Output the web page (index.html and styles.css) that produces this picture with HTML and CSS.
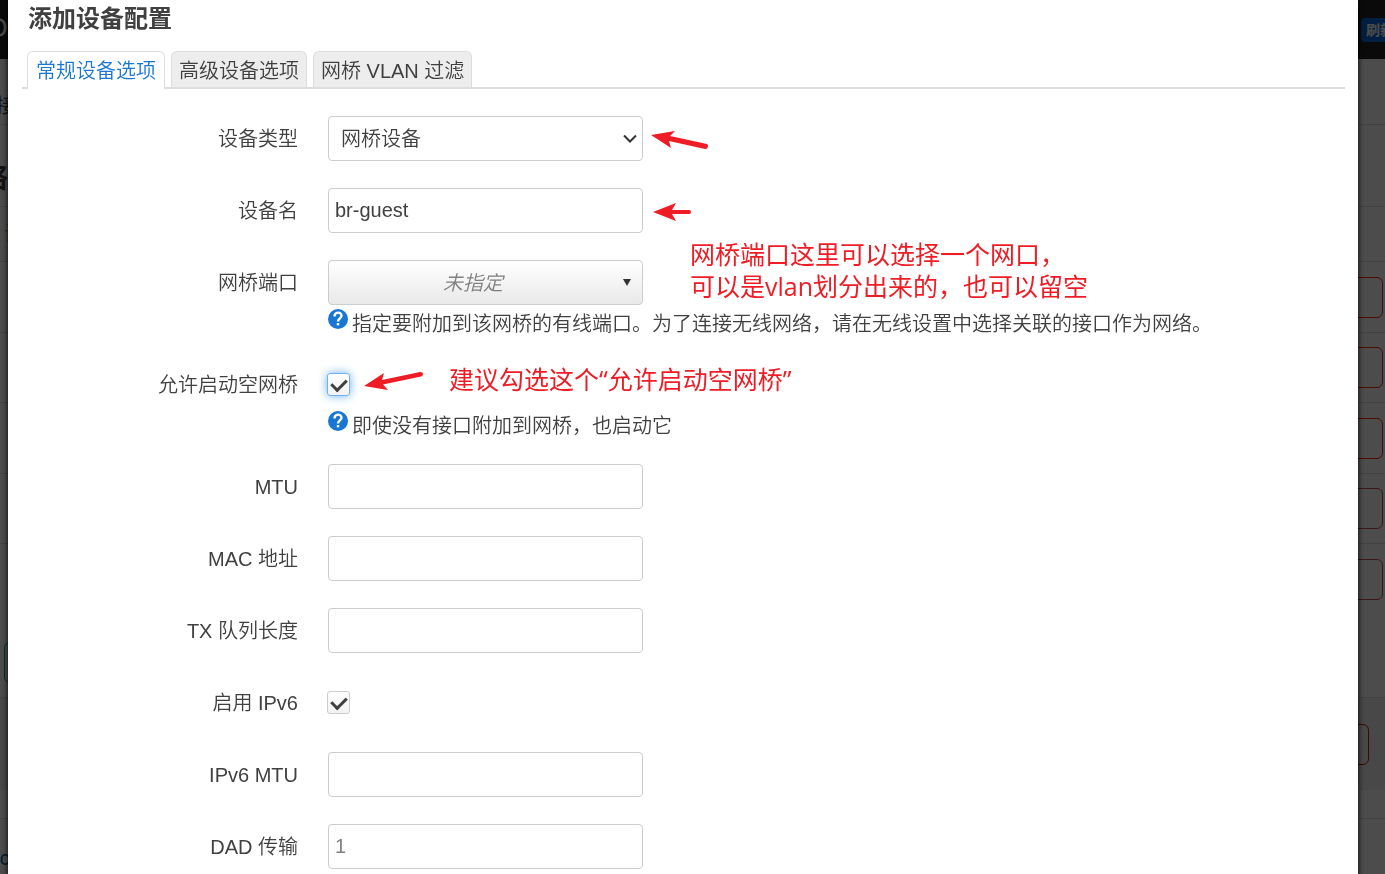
FILE: index.html
```html
<!DOCTYPE html>
<html lang="zh-CN">
<head>
    <meta charset="UTF-8">
    <meta name="viewport" content="width=device-width, initial-scale=1.0">
    <title>添加设备配置</title>
    <link rel="stylesheet" href="styles.css">
</head>
<body>

    <!-- 背景页面 -->
    <div id="page">
        <header class="navbar">
            <span class="brand">O</span>
            <button class="refresh">刷新</button>
        </header>
        <div class="page-tabs"><span>接</span></div>
        <h2 class="page-title">络</h2>
        <div class="table-head"><span>设</span></div>
        <div class="iface"><button class="remove">除</button></div>
        <div class="iface"><button class="remove">除</button></div>
        <div class="iface"><button class="remove">除</button></div>
        <div class="iface disabled"><button class="remove">除</button></div>
        <div class="iface disabled"><button class="remove">除</button></div>
        <div class="add-row"><button class="add">添加</button></div>
        <div class="page-actions"><button class="remove">复位</button></div>
        <footer><a href="#">rc</a></footer>
    </div>

    <!-- 对话框 -->
    <div id="overlay">
        <main class="modal" role="dialog" aria-labelledby="title">
            <h4 id="title">添加设备配置</h4>

            <ul class="tabs">
                <li class="active"><a href="#">常规设备选项</a></li>
                <li><a href="#">高级设备选项</a></li>
                <li><a href="#">网桥 VLAN 过滤</a></li>
            </ul>

            <form>
                <div class="row">
                    <label for="type">设备类型</label>
                    <div class="field">
                        <div class="control">
                            <select id="type">
                                <option>网桥设备</option>
                            </select>
                            <svg class="chevron" width="14" height="10" viewBox="0 0 14 10">
                                <path d="M1 1.500 L7 7.500 L13 1.500"/>
                            </svg>
                            <svg class="arrow arrow-type" width="58" height="22" viewBox="0 0 58 22">
                                <path d="M0 5 L24 1 L19 6 L56 14 Q58 16 56 18.500 L54 19 L18 11 L20 18 Z"/>
                            </svg>
                        </div>
                    </div>
                </div>

                <div class="row">
                    <label for="name">设备名</label>
                    <div class="field">
                        <div class="control">
                            <input type="text" id="name" value="br-guest">
                            <svg class="arrow arrow-name" width="40" height="20" viewBox="0 0 40 20">
                                <path d="M0 10 L23 1 L19 8 L36 8 Q38 8 38 10 Q38 12 36 12 L19 12 L23 19 Z"/>
                            </svg>
                        </div>
                    </div>
                </div>

                <div class="row">
                    <label for="ports">网桥端口</label>
                    <div class="field">
                        <div class="control">
                            <button type="button" class="dropdown" id="ports">
                                <em>未指定</em>
                                <span class="caret"></span>
                            </button>
                            <p class="note note-ports">网桥端口这里可以选择一个网口，<br>可以是vlan划分出来的，也可以留空</p>
                        </div>
                        <div class="help">
                            <svg width="20" height="20" viewBox="0 0 20 20">
                                <circle cx="10" cy="10" r="10"/>
                                <path d="M6.500 7.500 C6.500 2.500 13.500 2.500 13.500 6.800 C13.500 9.300 10 9.500 10 12.500"/>
                                <rect x="8.800" y="14" width="2.400" height="2.400"/>
                            </svg>
                            <span>指定要附加到该网桥的有线端口。为了连接无线网络，请在无线设置中选择关联的接口作为网络。</span>
                        </div>
                    </div>
                </div>

                <div class="row">
                    <label for="empty">允许启动空网桥</label>
                    <div class="field">
                        <div class="control">
                            <input type="checkbox" id="empty" class="focused" checked>
                            <svg class="arrow arrow-empty" width="60" height="22" viewBox="0 0 60 22">
                                <path d="M0 15 L20 2 L18 9 L56 1 Q59 1 59 3 Q59 5 57 5.500 L19 13.500 L24 19 Z"/>
                            </svg>
                            <p class="note note-empty">建议勾选这个“允许启动空网桥”</p>
                        </div>
                        <div class="help">
                            <svg width="20" height="20" viewBox="0 0 20 20">
                                <circle cx="10" cy="10" r="10"/>
                                <path d="M6.500 7.500 C6.500 2.500 13.500 2.500 13.500 6.800 C13.500 9.300 10 9.500 10 12.500"/>
                                <rect x="8.800" y="14" width="2.400" height="2.400"/>
                            </svg>
                            <span>即使没有接口附加到网桥，也启动它</span>
                        </div>
                    </div>
                </div>

                <div class="row">
                    <label for="mtu">MTU</label>
                    <div class="field"><div class="control"><input type="text" id="mtu"></div></div>
                </div>

                <div class="row">
                    <label for="mac">MAC 地址</label>
                    <div class="field"><div class="control"><input type="text" id="mac"></div></div>
                </div>

                <div class="row">
                    <label for="txq">TX 队列长度</label>
                    <div class="field"><div class="control"><input type="text" id="txq"></div></div>
                </div>

                <div class="row">
                    <label for="ipv6">启用 IPv6</label>
                    <div class="field"><div class="control"><input type="checkbox" id="ipv6" checked></div></div>
                </div>

                <div class="row">
                    <label for="mtu6">IPv6 MTU</label>
                    <div class="field"><div class="control"><input type="text" id="mtu6"></div></div>
                </div>

                <div class="row">
                    <label for="dad">DAD 传输</label>
                    <div class="field"><div class="control"><input type="text" id="dad" placeholder="1"></div></div>
                </div>
            </form>
        </main>
    </div>

</body>
</html>
```
FILE: styles.css
```css
* {
    box-sizing: border-box;
}

body {
    margin: 0;
    overflow: hidden;
    background: #fff;
    color: #404040;
    font-family: "Liberation Sans", "Noto Sans CJK SC", sans-serif;
    font-size: 20px;
    font-weight: 350;
}

button, input, select {
    font: inherit;
    color: inherit;
}

a {
    color: inherit;
    text-decoration: none;
}

/* 背景页面 */
.navbar {
    display: flex;
    align-items: center;
    justify-content: space-between;
    height: 59px;
    padding-bottom: 4px;
    background: #222;
    color: #fff;
    overflow: hidden;
}

.brand {
    margin-left: -14px;
    font-size: 28px;
}

.refresh {
    flex: none;
    width: 48px;
    height: 24px;
    margin-top: 4px;
    margin-right: -24px;
    padding: 0 5px;
    border: 0;
    border-radius: 4px;
    background: #0069d6;
    color: #fff;
    font-size: 14px;
    font-weight: bold;
    line-height: 24px;
    text-align: left;
}

.page-tabs {
    height: 66px;
    padding-top: 29px;
    border-bottom: 1px solid #ddd;
    line-height: 36px;
}

.page-tabs span {
    margin-left: -4px;
}

.page-title {
    height: 82px;
    margin: 0;
    border-bottom: 1px solid #ddd;
    font-size: 28px;
    line-height: 108px;
    text-indent: -20px;
}

.table-head {
    height: 55px;
    padding-left: 4px;
    border-bottom: 1px solid #ddd;
    color: #c96;
    line-height: 54px;
}

.iface {
    display: flex;
    align-items: center;
    justify-content: flex-end;
    height: 71px;
    padding-right: 2px;
    border-bottom: 1px solid #ddd;
}

.iface:nth-of-type(even) {
    height: 70px;
}

.iface:nth-of-type(7) {
    border-bottom: 0;
}

.remove, .add {
    width: 80px;
    height: 41px;
    border: 1px solid #f20;
    border-radius: 6px;
    background: transparent;
    color: #c44;
}

.iface.disabled .remove {
    border-color: #c65348;
    color: #c99;
}

.add-row {
    height: 83px;
    padding: 27px 4px 0;
    border-bottom: 1px solid #ddd;
}

.add {
    border-color: #0a6;
    color: #0a6;
}

.page-actions {
    display: flex;
    align-items: center;
    justify-content: flex-end;
    height: 92px;
    padding-right: 16px;
    background: #f0f0f0;
}

.page-actions .remove {
    border-color: #c20;
}

footer {
    margin-top: 28px;
    padding-top: 28px;
    border-top: 1px solid #ddd;
    color: #069;
    text-indent: -7px;
}

/* 对话框 */
#overlay {
    position: fixed;
    inset: 0;
    overflow: hidden;
    padding: 0 27px 0 8px;
    background: rgba(0, 0, 0, 0.7);
}

.modal {
    min-height: 100vh;
    padding: 0 13px 4px 14px;
    background: #fff;
    box-shadow: 0 0 6px #000;
}

h4 {
    margin: 0;
    padding: 0 6px;
    font-size: 24px;
    line-height: 38px;
}

.tabs {
    display: flex;
    gap: 6px;
    margin: 13px 0 27px;
    padding: 0 5px;
    border-bottom: 2px solid #ddd;
    list-style: none;
}

.tabs li {
    height: 36px;
    padding: 0 7px;
    border: 1px solid #ddd;
    border-bottom: 0;
    border-radius: 6px 6px 0 0;
    background: #ededed;
    line-height: 38px;
}

.tabs .active {
    height: 38px;
    margin-bottom: -2px;
    padding: 0 8px;
    background: #fff;
    color: #1976d2;
}

.row {
    display: flex;
    gap: 30px;
    margin-bottom: 26px;
}

.row label {
    flex: none;
    width: 276px;
    line-height: 46px;
    text-align: right;
}

.field {
    flex: 1;
}

.control {
    position: relative;
    display: flex;
    align-items: center;
    height: 45px;
}

.control select,
.control input[type="text"],
.dropdown {
    width: 315px;
    height: 45px;
    padding: 0 6px;
    border: 1px solid #ccc;
    border-radius: 4px;
    background: #fff;
}

.control select {
    appearance: none;
    padding: 0 24px 0 12px;
}

.chevron {
    position: absolute;
    top: 18px;
    left: 295px;
    fill: none;
    stroke: #333;
    stroke-width: 2;
    pointer-events: none;
}

.control ::placeholder {
    color: #808080;
}

.control .dropdown {
    display: flex;
    align-items: center;
    padding: 0 11px 0 6px;
    background: linear-gradient(#fff, #e9e9e9);
}

.dropdown em {
    flex: 1;
    padding: 0 12px 2px 0;
    color: #808080;
}

.caret {
    border: 4px solid transparent;
    border-top: 7px solid #333;
    border-bottom: 0;
}

.control input[type="checkbox"] {
    appearance: none;
    display: flex;
    justify-content: center;
    width: 23px;
    height: 23px;
    margin: 0 0 0 -1px;
    border: 1px solid #ccc;
    border-radius: 3px;
    background: linear-gradient(#fff, #f2f2f2);
}

.control input[type="checkbox"]:checked::after {
    content: "";
    width: 7px;
    height: 12px;
    margin-top: 2px;
    border: solid #404040;
    border-width: 0 3px 3px 0;
    transform: rotate(45deg);
}

.control input.focused {
    border-color: #6fb1ee;
    box-shadow: 0 0 10px #6fb1ee;
}

.help {
    display: flex;
    gap: 4px;
    min-height: 31px;
    padding-top: 4px;
    line-height: 22px;
}

.help span {
    padding-top: 4px;
}

.help svg {
    flex: none;
    fill: #1976d2;
}

.help path {
    fill: none;
    stroke: #fff;
    stroke-width: 2.4;
}

.help rect {
    fill: #fff;
}

/* 红色标注 */
.arrow {
    position: absolute;
    fill: #ee1c25;
}

.arrow-type {
    top: 14px;
    left: 323px;
}

.arrow-name {
    top: 14px;
    left: 325px;
}

.arrow-empty {
    top: 9px;
    left: 36px;
}

.note {
    position: absolute;
    margin: 0;
    color: #ee1c25;
    font-family: "Open Sans", "Noto Sans CJK SC", sans-serif;
    font-size: 25px;
    font-weight: 400;
    line-height: 32px;
    white-space: nowrap;
}

.note-ports {
    top: -22px;
    left: 362px;
}

.note-empty {
    top: 1px;
    left: 121px;
}
```
